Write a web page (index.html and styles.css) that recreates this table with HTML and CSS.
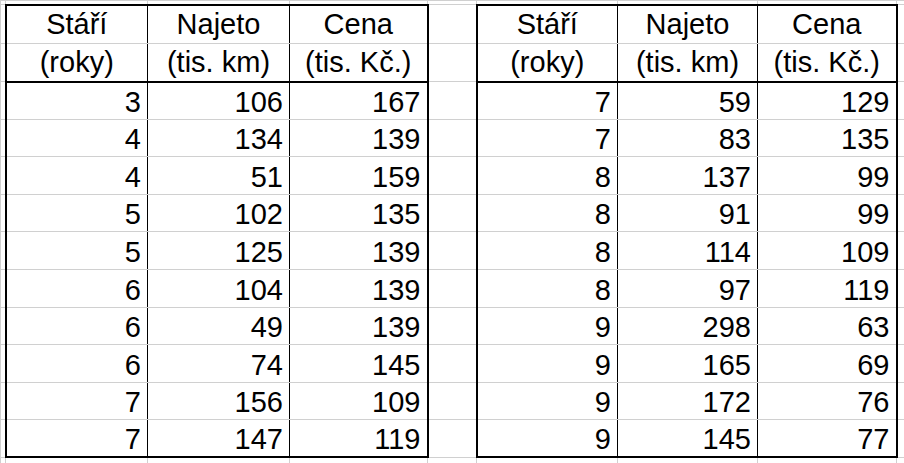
FILE: index.html
```html
<!DOCTYPE html>
<html lang="cs">
<head>
<meta charset="utf-8">
<title>Stáří, najeto, cena</title>
<link rel="stylesheet" href="styles.css">
</head>
<body>
<table class="sheet">
  <colgroup>
    <col class="w-edge">
    <col class="w-a1"><col class="w-b1"><col class="w-c1">
    <col class="w-gap">
    <col class="w-a2"><col class="w-b2"><col class="w-c2">
    <col class="w-rest">
  </colgroup>
  <tr class="r-top">
    <td></td><td></td><td></td><td></td><td></td><td></td><td></td><td></td><td></td>
  </tr>
  <tr class="r-head">
    <td></td>
    <th class="t t-l t-top">Stáří</th><th class="t t-top">Najeto</th><th class="t t-r t-top">Cena</th>
    <td></td>
    <th class="t t-l t-top">Stáří</th><th class="t t-top">Najeto</th><th class="t t-r t-top">Cena</th>
    <td></td>
  </tr>
  <tr class="r-head">
    <td></td>
    <th class="t t-l t-hb">(roky)</th><th class="t t-hb">(tis. km)</th><th class="t t-r t-hb">(tis. Kč.)</th>
    <td></td>
    <th class="t t-l t-hb">(roky)</th><th class="t t-hb">(tis. km)</th><th class="t t-r t-hb">(tis. Kč.)</th>
    <td></td>
  </tr>
  <tr class="r-data"><td></td><td class="t t-l">3</td><td class="t">106</td><td class="t t-r">167</td><td></td><td class="t t-l">7</td><td class="t">59</td><td class="t t-r">129</td><td></td></tr>
  <tr class="r-data"><td></td><td class="t t-l">4</td><td class="t">134</td><td class="t t-r">139</td><td></td><td class="t t-l">7</td><td class="t">83</td><td class="t t-r">135</td><td></td></tr>
  <tr class="r-data"><td></td><td class="t t-l">4</td><td class="t">51</td><td class="t t-r">159</td><td></td><td class="t t-l">8</td><td class="t">137</td><td class="t t-r">99</td><td></td></tr>
  <tr class="r-data"><td></td><td class="t t-l">5</td><td class="t">102</td><td class="t t-r">135</td><td></td><td class="t t-l">8</td><td class="t">91</td><td class="t t-r">99</td><td></td></tr>
  <tr class="r-data"><td></td><td class="t t-l">5</td><td class="t">125</td><td class="t t-r">139</td><td></td><td class="t t-l">8</td><td class="t">114</td><td class="t t-r">109</td><td></td></tr>
  <tr class="r-data"><td></td><td class="t t-l">6</td><td class="t">104</td><td class="t t-r">139</td><td></td><td class="t t-l">8</td><td class="t">97</td><td class="t t-r">119</td><td></td></tr>
  <tr class="r-data"><td></td><td class="t t-l">6</td><td class="t">49</td><td class="t t-r">139</td><td></td><td class="t t-l">9</td><td class="t">298</td><td class="t t-r">63</td><td></td></tr>
  <tr class="r-data"><td></td><td class="t t-l">6</td><td class="t">74</td><td class="t t-r">145</td><td></td><td class="t t-l">9</td><td class="t">165</td><td class="t t-r">69</td><td></td></tr>
  <tr class="r-data"><td></td><td class="t t-l">7</td><td class="t">156</td><td class="t t-r">109</td><td></td><td class="t t-l">9</td><td class="t">172</td><td class="t t-r">76</td><td></td></tr>
  <tr class="r-data"><td></td><td class="t t-l t-bot">7</td><td class="t t-bot">147</td><td class="t t-r t-bot">119</td><td></td><td class="t t-l t-bot">9</td><td class="t t-bot">145</td><td class="t t-r t-bot">77</td><td></td></tr>
  <tr class="r-bottom">
    <td></td><td></td><td></td><td></td><td></td><td></td><td></td><td></td><td></td>
  </tr>
</table>
</body>
</html>
```

FILE: styles.css
```css
html, body {
  margin: 0;
  padding: 0;
  background: #ffffff;
  overflow: hidden;
}

.sheet {
  border-collapse: collapse;
  table-layout: fixed;
  width: 1096px;
  font-family: "Liberation Sans", Arial, sans-serif;
  font-size: 29px;
  color: #000;
}

.w-edge { width: 5px; }
.w-a1 { width: 142px; }
.w-b1 { width: 142px; }
.w-c1 { width: 138px; }
.w-gap { width: 49px; }
.w-a2 { width: 141px; }
.w-b2 { width: 140px; }
.w-c2 { width: 139px; }
.w-rest { width: 200px; }

.sheet td,
.sheet th {
  box-sizing: border-box;
  border: 1px solid #d0d0d0;
  padding: 0;
  line-height: 29px;
  white-space: nowrap;
  overflow: hidden;
}

.r-top td { height: 4px; }
.r-head th, .r-head td { height: 38.5px; }
.r-data td { height: 37.6px; }
.r-bottom td { height: 10px; }

.sheet th {
  font-weight: normal;
  text-align: center;
  vertical-align: middle;
  padding-top: 1px;
}

.sheet td.t {
  text-align: right;
  vertical-align: bottom;
  padding-right: 6px;
  padding-bottom: 2px;
}

.sheet .t {
  border-left: 1px solid #000;
  border-right: 1px solid #000;
}

.sheet .t-l { border-left: 2px solid #000; }
.sheet .t-r { border-right: 2px solid #000; }
.sheet .t-top { border-top: 2px solid #000; }
.sheet .t-hb { border-bottom: 2px solid #000; }
.sheet .t-bot { border-bottom: 2px solid #000; }
```
